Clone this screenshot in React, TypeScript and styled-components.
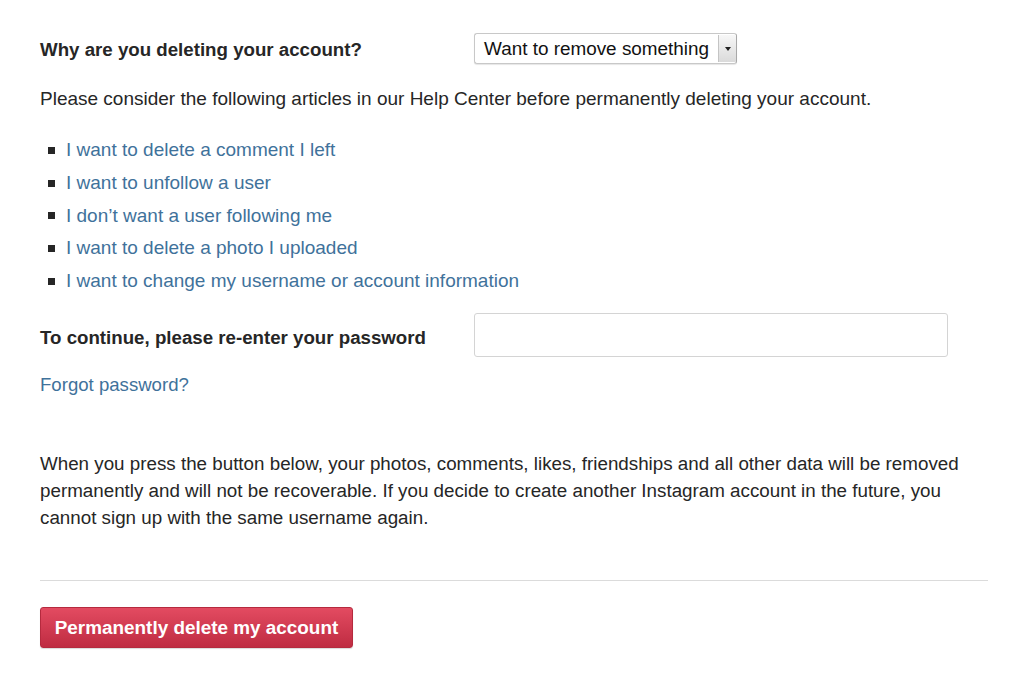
import React from "react";
import styled, { createGlobalStyle } from "styled-components";

const Global = createGlobalStyle`
  html, body { margin: 0; padding: 0; background: #fff; }
  body { font-family: "Liberation Sans", Arial, sans-serif; color: #262626; }
`;

const Page = styled.div`
  width: 948px;
  padding: 33px 0 40px 40px;
`;

const FieldRow = styled.div<{ $h: number; $mt?: number }>`
  display: flex;
  align-items: center;
  height: ${(p) => p.$h}px;
  margin-top: ${(p) => p.$mt ?? 0}px;
`;

const Label = styled.label<{ $dy?: number }>`
  width: 434px;
  flex: none;
  font-size: 18.7px;
  font-weight: 700;
  color: #262626;
  position: relative;
  top: ${(p) => p.$dy ?? 0}px;
`;

const SelectBox = styled.div`
  display: flex;
  align-items: stretch;
  width: 263px;
  height: 31px;
  box-sizing: border-box;
  border: 1px solid #c8c8c8;
  border-right-color: #a8a8a8;
  border-radius: 3px;
  background: #fff;
  box-shadow: 0 1px 1px rgba(0,0,0,0.1);
  overflow: hidden;
`;

const SelectText = styled.span`
  flex: 1;
  display: flex;
  align-items: center;
  padding-left: 9px;
  font-family: "Liberation Sans", Arial, sans-serif;
  font-size: 18.9px;
  color: #111;
  white-space: nowrap;
`;

const SelectArrow = styled.span`
  width: 17px;
  margin: 1px 0;
  display: flex;
  align-items: center;
  justify-content: center;
  border-left: 1px solid #c4c4c4;
  background: linear-gradient(#f7f7f7, #dadada);
  &::after {
    content: "";
    border-left: 3px solid transparent;
    border-right: 3px solid transparent;
    border-top: 4px solid #222;
  }
`;

const Text = styled.p<{ $mt: number; $lh: number; $fs: number }>`
  margin: ${(p) => p.$mt}px 0 0;
  font-size: ${(p) => p.$fs}px;
  line-height: ${(p) => p.$lh}px;
  color: #262626;
`;

const List = styled.ul`
  list-style: none;
  margin: 22px 0 0;
  padding: 0 0 0 8px;
`;

const Item = styled.li`
  display: flex;
  align-items: center;
  height: 32.7px;
  &::before {
    content: "";
    width: 7px;
    height: 7px;
    background: #262626;
    margin-right: 11px;
    flex: none;
  }
`;

const Link = styled.a<{ $fs?: number }>`
  color: #3f729b;
  text-decoration: none;
  font-size: ${(p) => p.$fs ?? 19}px;
`;

const Input = styled.input`
  width: 474px;
  height: 44px;
  box-sizing: border-box;
  border: 1px solid #d4d4d4;
  border-radius: 3px;
  background: #fff;
  outline: none;
  font-size: 16px;
  padding: 0 10px;
`;

const Forgot = styled.div`
  margin-top: 15px;
  line-height: 26px;
`;

const Divider = styled.hr`
  margin: 49px 0 0;
  border: none;
  border-top: 1px solid #dbdbdb;
  height: 0;
`;

const DangerButton = styled.button`
  margin-top: 26px;
  width: 313px;
  height: 41px;
  box-sizing: border-box;
  border: 1px solid #b52a3e;
  border-radius: 3px;
  background: linear-gradient(#e34b61, #bf2c42);
  color: #fff;
  font-family: "Liberation Sans", Arial, sans-serif;
  font-size: 18.9px;
  font-weight: 700;
  cursor: pointer;
  box-shadow: 0 1px 1px rgba(0,0,0,0.15);
  padding: 0;
`;

const links = [
  "I want to delete a comment I left",
  "I want to unfollow a user",
  "I don\u2019t want a user following me",
  "I want to delete a photo I uploaded",
  "I want to change my username or account information",
];

export default function App() {
  return (
    <>
      <Global />
      <Page>
        <FieldRow $h={31}>
          <Label $dy={1}>Why are you deleting your account?</Label>
          <SelectBox>
            <SelectText>Want to remove something</SelectText>
            <SelectArrow />
          </SelectBox>
        </FieldRow>
        <Text $mt={22} $lh={26} $fs={19}>
          Please consider the following articles in our Help Center before permanently deleting your account.
        </Text>
        <List>
          {links.map((l) => (
            <Item key={l}>
              <Link href="#">{l}</Link>
            </Item>
          ))}
        </List>
        <FieldRow $h={44} $mt={16}>
          <Label $dy={3}>To continue, please re-enter your password</Label>
          <Input type="password" />
        </FieldRow>
        <Forgot>
          <Link href="#" $fs={18.6}>Forgot password?</Link>
        </Forgot>
        <Text $mt={51} $lh={27} $fs={18.8}>
          When you press the button below, your photos, comments, likes, friendships and all other data will be removed
          permanently and will not be recoverable. If you decide to create another Instagram account in the future, you
          cannot sign up with the same username again.
        </Text>
        <Divider />
        <DangerButton>Permanently delete my account</DangerButton>
      </Page>
    </>
  );
}
